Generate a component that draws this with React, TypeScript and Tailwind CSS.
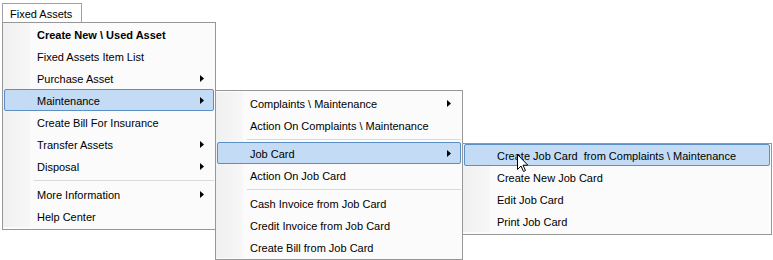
import React from "react";

type Item = { label: string; bold?: boolean; sub?: boolean; active?: boolean } | "sep";

const mainItems: Item[] = [
  { label: "Create New \\ Used Asset", bold: true },
  { label: "Fixed Assets Item List" },
  { label: "Purchase Asset", sub: true },
  { label: "Maintenance", sub: true, active: true },
  { label: "Create Bill For Insurance" },
  { label: "Transfer Assets", sub: true },
  { label: "Disposal", sub: true },
  "sep",
  { label: "More Information", sub: true },
  { label: "Help Center" },
];

const maintItems: Item[] = [
  { label: "Complaints \\ Maintenance", sub: true },
  { label: "Action On Complaints \\ Maintenance" },
  "sep",
  { label: "Job Card", sub: true, active: true },
  { label: "Action On Job Card" },
  "sep",
  { label: "Cash Invoice from Job Card" },
  { label: "Credit Invoice from Job Card" },
  { label: "Create Bill from Job Card" },
];

const jobItems: Item[] = [
  { label: "Create Job Card  from Complaints \\ Maintenance", active: true },
  { label: "Create New Job Card" },
  { label: "Edit Job Card" },
  { label: "Print Job Card" },
];

function Arrow() {
  return (
    <svg width="4" height="7" viewBox="0 0 4 7" className="shrink-0">
      <path d="M0 0 L4 3.5 L0 7 Z" fill="#000" />
    </svg>
  );
}

function Menu({ items, className }: { items: Item[]; className: string }) {
  return (
    <div className={`border border-[#979797] bg-[#fbfbfb] ${className}`}>
      <div className="relative">
        <div className="absolute inset-y-0 left-0 w-[27px] bg-gradient-to-r from-[#f0f0f0] to-[#f7f7f7]" />
        {items.map((item, i) =>
          item === "sep" ? (
            <div key={i} className="relative flex h-[6px] items-center pl-[31px] pr-[1px]">
              <div className="h-px w-full bg-[#d9d9d9]" />
            </div>
          ) : (
            <div
              key={i}
              className={`relative mx-[1px] flex h-[22px] items-center rounded-[2px] border pl-[32px] pr-[9px] ${
                item.active ? "border-[#5b8fc6] bg-[#c3dbf4]" : "border-transparent"
              }`}
            >
              <span className={`flex-1 whitespace-pre pt-[2px] text-[#000] ${item.bold ? "font-bold" : ""}`}>
                {item.label}
              </span>
              {item.sub && <Arrow />}
            </div>
          ),
        )}
      </div>
    </div>
  );
}

export default function App() {
  return (
    <div
      className="relative h-[260px] w-[773px] overflow-hidden bg-white text-[11px] leading-none"
      style={{ fontFamily: '"Liberation Sans", Arial, sans-serif' }}
    >
      <div className="ml-[2px] pt-[3px]">
        <div className="flex h-[19px] w-[80px] items-center border border-b-0 border-[#a0a0a0] bg-white pl-[7px] pt-[2px]">
          Fixed Assets
        </div>
        <Menu items={mainItems} className="w-[214px] pb-[2px]" />
      </div>
      <Menu items={maintItems} className="absolute left-[215px] top-[90px] w-[248px] py-[1px]" />
      <Menu items={jobItems} className="absolute left-[462px] top-[143px] w-[310px] pb-[2px]" />
      <svg className="absolute left-[517px] top-[154px]" width="12" height="19" viewBox="0 0 12 19">
        <path
          d="M0.5 0.5 L0.5 15.5 L4 12 L6.5 17.5 L8.5 16.5 L6 11.2 L10.8 11.2 Z"
          fill="#fff"
          stroke="#000"
          strokeWidth="1"
          strokeLinejoin="miter"
        />
      </svg>
    </div>
  );
}
